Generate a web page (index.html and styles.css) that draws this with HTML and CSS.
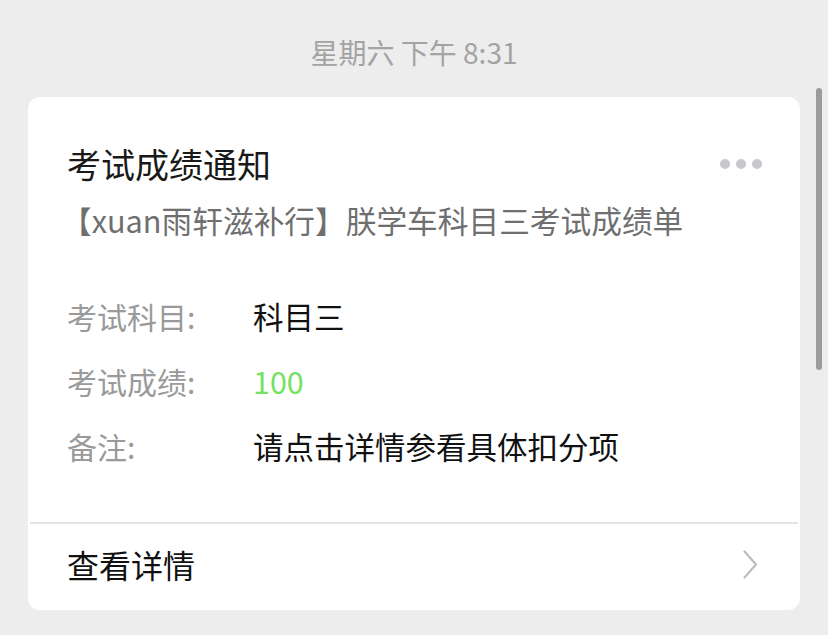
FILE: index.html
```html
<!DOCTYPE html>
<html lang="zh-CN">

<head>
    <meta charset="UTF-8">
    <meta name="viewport" content="width=device-width, initial-scale=1.0">
    <title>考试成绩通知</title>
    <link rel="stylesheet" href="styles.css">
</head>

<body>

    <div class="hora">星期六 下午 8:31</div>

    <div class="tarjeta">
        <div class="cabecera">
            <h2>考试成绩通知</h2>
            <span class="puntos"><i></i><i></i><i></i></span>
        </div>
        <p class="subtitulo">【xuan雨轩滋补行】朕学车科目三考试成绩单</p>

        <div class="filas">
            <div class="fila">
                <span class="etiqueta">考试科目:</span>
                <span class="valor">科目三</span>
            </div>
            <div class="fila">
                <span class="etiqueta">考试成绩:</span>
                <span class="valor verde">100</span>
            </div>
            <div class="fila">
                <span class="etiqueta">备注:</span>
                <span class="valor">请点击详情参看具体扣分项</span>
            </div>
        </div>

        <div class="detalle">
            <span>查看详情</span>
            <svg width="15" height="29" viewBox="0 0 15 29">
                <path d="M1.5 1.5 L13 14.5 L1.5 27.5" fill="none" stroke="#bcbcbc" stroke-width="2.2" stroke-linecap="round" stroke-linejoin="round" />
            </svg>
        </div>
    </div>

    <div class="scroll"></div>

</body>

</html>
```

FILE: styles.css
```css
body {
    background: #ededed;
    margin: 0px;
    font-family: 'Noto Sans CJK SC', 'Noto Sans', sans-serif;
}

.hora {
    text-align: center;
    color: #a3a3a3;
    font-size: 28px;
    line-height: 36px;
    padding-top: 34px;
    padding-bottom: 27px;
}

.tarjeta {
    background: white;
    margin: 0px 28px;
    border-radius: 12px;
    overflow: hidden;
}

.cabecera {
    display: flex;
    justify-content: space-between;
    align-items: center;
    padding: 47px 38px 0px 39px;
}

.cabecera h2 {
    margin: 0px;
    font-size: 34px;
    font-weight: normal;
    line-height: 40px;
    color: #191919;
}

.puntos {
    display: flex;
    gap: 6px;
}

.puntos i {
    width: 10px;
    height: 10px;
    border-radius: 50%;
    background: #c7c7cc;
}

.subtitulo {
    margin: 16px 0px 0px 33px;
    font-size: 30.7px;
    line-height: 40px;
    color: #6f6f6f;
}

.filas {
    padding: 56px 0px 0px 39px;
}

.fila {
    display: grid;
    grid-template-columns: 186px 1fr;
    height: 65px;
    line-height: 40px;
}

.etiqueta {
    font-size: 30px;
    color: #9a9a9a;
}

.valor {
    font-size: 30.5px;
    color: #111111;
}

.valor.verde {
    color: #74e262;
}

.detalle {
    display: flex;
    justify-content: space-between;
    align-items: center;
    margin: 31px 2px 0px 2px;
    border-top: 2px solid #e4e4e4;
    padding: 20px 40px 26px 37px;
}

.detalle span {
    font-size: 32px;
    line-height: 40px;
    color: #111111;
}

.scroll {
    position: absolute;
    top: 88px;
    right: 6px;
    width: 6px;
    height: 282px;
    border-radius: 3px;
    background: #9c9c9c;
}
```
